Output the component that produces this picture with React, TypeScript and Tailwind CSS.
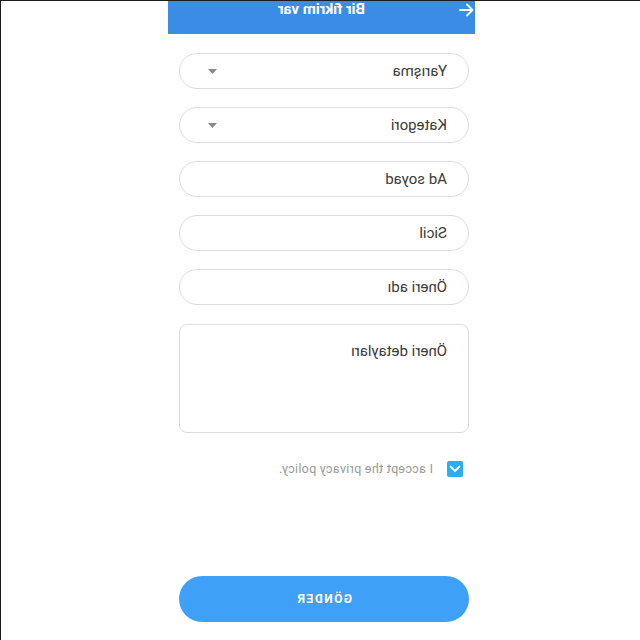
import { useState } from 'react'

const fields = ['Ad soyad', 'Sicil', 'Öneri adı']

function Caret() {
  return (
    <svg width="9" height="5" viewBox="0 0 9 5" className="text-[#8a8a8a]">
      <path d="M0 0h9L4.5 5z" fill="currentColor" />
    </svg>
  )
}

export default function App() {
  const [accepted, setAccepted] = useState(true)

  return (
    <div className="w-[640px] h-[640px] overflow-hidden bg-white border-t border-l border-[#1c1c1c] font-['Roboto','Liberation_Sans',sans-serif]">
      {/* whole screen is shown mirrored in the capture */}
      <div className="-scale-x-100 h-full">
        <div className="w-[307px] ml-[165px] flex flex-col">
          {/* Header */}
          <div className="h-[33px] bg-[#3b8ce5] relative">
            <div className="h-[16px] flex items-center justify-center">
              <svg className="absolute left-[1px] top-[2px]" width="15" height="14" viewBox="0 0 15 14" fill="none" stroke="white" strokeWidth="1.8" strokeLinecap="round" strokeLinejoin="round">
                <path d="M14 7H1.5M7 1.5L1.5 7 7 12.5" />
              </svg>
              <span className="text-white font-bold text-[15px] leading-none">Bir fikrim var</span>
            </div>
          </div>

          <div className="ml-[6px] w-[290px] flex flex-col mt-[19px]">
            {['Yarışma', 'Kategori'].map(label => (
              <div key={label} className="h-[36px] mb-[18px] rounded-full border border-[#dcdcdc] flex items-center justify-between pl-[21px] pr-[28px]">
                <span className="text-[15px] text-[#3a3a3a]">{label}</span>
                <Caret />
              </div>
            ))}

            {fields.map(label => (
              <div key={label} className="h-[36px] mb-[18px] rounded-full border border-[#dcdcdc] flex items-center pl-[21px]">
                <span className="text-[15px] text-[#3a3a3a]">{label}</span>
              </div>
            ))}

            <div className="h-[109px] mt-[1px] rounded-lg border border-[#dcdcdc] pl-[21px] pt-[14px]">
              <span className="text-[15px] text-[#3a3a3a]">Öneri detayları</span>
            </div>

            <div className="flex items-center mt-[27px] pl-[6px] gap-[14px]">
              <button
                onClick={() => setAccepted(!accepted)}
                className={`w-[16px] h-[16px] rounded-[2px] flex items-center justify-center ${accepted ? 'bg-[#29aef2]' : 'bg-white border border-gray-300'}`}
              >
                {accepted && (
                  <svg width="12" height="8" viewBox="0 0 12 8" fill="none" stroke="white" strokeWidth="1.8" strokeLinecap="round" strokeLinejoin="round">
                    <path d="M1.5 1.5L6 6l4.5-4.5" />
                  </svg>
                )}
              </button>
              <span className="text-[12.5px] text-[#9a9a9a] tracking-[0.3px]">I accept the privacy policy.</span>
            </div>

            <button className="h-[46px] mt-[97px] rounded-full bg-[#3ea0f7] text-white text-[12px] font-bold tracking-[1.5px]">
              GÖNDER
            </button>
          </div>
        </div>
      </div>
    </div>
  )
}
